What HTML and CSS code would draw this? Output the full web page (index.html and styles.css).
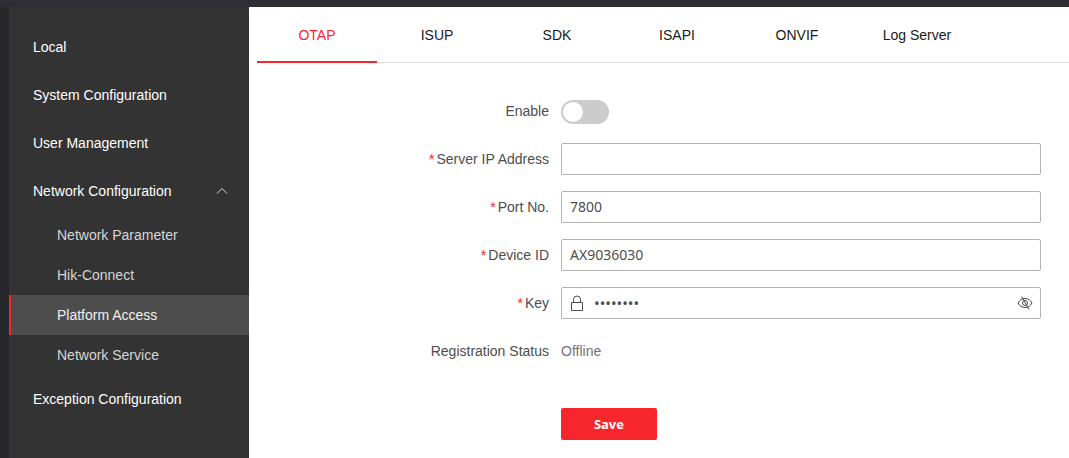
FILE: index.html
```html
<!DOCTYPE html>
<html lang="en">
<head>
<meta charset="utf-8">
<title>Platform Access</title>
<link rel="stylesheet" href="styles.css">
</head>
<body>
<div class="app">
  <header class="topbar"></header>
  <div class="body">
    <div class="rail"></div>
    <nav class="sidebar">
      <a class="item" href="#">Local</a>
      <a class="item" href="#">System Configuration</a>
      <a class="item" href="#">User Management</a>
      <button class="item" type="button" aria-expanded="true">Network Configuration
        <svg class="chevron" viewBox="0 0 12 12" width="12" height="12"><path d="M1 8.500 6 3.500l5 5"/></svg>
      </button>
      <div class="submenu">
        <a class="subitem" href="#">Network Parameter</a>
        <a class="subitem" href="#">Hik-Connect</a>
        <a class="subitem active" href="#" aria-current="page">Platform Access</a>
        <a class="subitem" href="#">Network Service</a>
      </div>
      <a class="item" href="#">Exception Configuration</a>
    </nav>
    <main class="content">
      <div class="tabs">
        <a class="tab selected" href="#">OTAP</a>
        <a class="tab" href="#">ISUP</a>
        <a class="tab" href="#">SDK</a>
        <a class="tab" href="#">ISAPI</a>
        <a class="tab" href="#">ONVIF</a>
        <a class="tab" href="#">Log Server</a>
      </div>
      <form class="form">
        <label class="label" for="enable">Enable</label>
        <input class="switch" id="enable" type="checkbox" role="switch">
        <label class="label required" for="server">Server IP Address</label>
        <input class="field" id="server" type="text">
        <label class="label required" for="port">Port No.</label>
        <input class="field" id="port" type="text" value="7800">
        <label class="label required" for="device">Device ID</label>
        <input class="field" id="device" type="text" value="AX9036030">
        <label class="label required" for="key">Key</label>
        <div class="field keybox">
          <svg class="icon" viewBox="0 0 16 16" width="16" height="16"><path d="M2.500 7.500h11v8h-11zM4.500 7.500V4.500a3.500 3.500 0 0 1 7 0v3"/></svg>
          <input class="key" id="key" type="password" value="abcdefgh">
          <button class="eye" type="button" aria-label="Show key">
            <svg class="icon" viewBox="0 0 16 16" width="16" height="16"><path d="M1 8c1.500-3 4-4.500 7-4.500S13.500 5 15 8c-1.500 3-4 4.500-7 4.500S2.500 11 1 8z"/><circle cx="8" cy="8" r="2.500"/><path d="m4.500 1.500 7.500 13"/></svg>
          </button>
        </div>
        <span class="label">Registration Status</span>
        <output class="status">Offline</output>
        <button class="save" type="submit">Save</button>
      </form>
    </main>
  </div>
</div>
</body>
</html>
```
FILE: styles.css
```css
* { box-sizing: border-box; }
body {
  margin: 0;
  font: 14px/20px "Liberation Sans", Arial, sans-serif;
  color: #4d4d4d;
  background: #fff;
}
a { color: inherit; text-decoration: none; }
button, input { font: inherit; color: inherit; }
svg { fill: none; stroke: currentColor; }
.app { display: flex; flex-direction: column; min-height: 100vh; }
.topbar { height: 7px; background: #2d2d33; }
.body { display: flex; flex: 1; }
.rail { width: 9px; background: #27272a; }
.sidebar {
  display: flex;
  flex-direction: column;
  flex: none;
  width: 240px;
  padding-top: 16px;
  background: #333;
  color: #fff;
}
.item {
  display: flex;
  align-items: center;
  justify-content: space-between;
  height: 48px;
  padding: 0 21px 0 24px;
  border: 0;
  background: none;
  text-align: left;
}
.chevron { color: #ddd; }
.subitem {
  display: flex;
  align-items: center;
  height: 40px;
  padding-left: 46px;
  border-left: 2px solid transparent;
  color: #d6d6d6;
}
.subitem.active {
  border-left-color: #f7262d;
  background: #4d4d4d;
  color: #f0f0f0;
}
.content { flex: 1; min-width: 0; padding-left: 8px; }
.tabs {
  display: flex;
  height: 56px;
  box-shadow: inset 0 -1px #ddd;
  color: #1a1a1a;
}
.tab {
  display: flex;
  align-items: center;
  justify-content: center;
  width: 120px;
  border: solid transparent;
  border-width: 2px 0;
}
.tab.selected { border-bottom-color: #f7262d; color: #f7262d; }
.form {
  display: grid;
  grid-template-columns: 292px minmax(0, 480px);
  grid-auto-rows: 32px;
  align-items: center;
  gap: 16px 12px;
  padding: 32px 28px 16px 0;
}
.label { text-align: right; }
.required::before { content: "*"; margin-right: 2px; color: #f7262d; }
.switch {
  appearance: none;
  width: 48px;
  height: 24px;
  margin: 2px 0 0;
  padding: 2px;
  border-radius: 12px;
  background: #ccc;
}
.switch::before {
  content: "";
  display: block;
  width: 20px;
  height: 20px;
  border-radius: 50%;
  background: #fff;
}
.switch:checked { padding-left: 26px; background: #f7262d; }
.field {
  width: 100%;
  height: 32px;
  padding: 0 8px 2px;
  border: 1px solid #b3b3b3;
  border-radius: 2px;
  background: #fff;
  font-family: "Noto Sans", sans-serif;
}
.keybox { display: flex; align-items: center; padding: 0 7px; }
.icon { display: block; }
.key {
  flex: 1;
  min-width: 0;
  padding: 0 9px;
  border: 0;
  outline: 0;
  background: none;
  font-size: 15px;
}
.eye { padding: 0; border: 0; background: none; }
.status { color: #737373; }
.save {
  grid-column: 2;
  width: 96px;
  height: 32px;
  margin-top: 50px;
  border: 0;
  border-radius: 2px;
  background: #f7262d;
  color: #fff;
  font: bold 13px/20px "Noto Sans", sans-serif;
}
```
